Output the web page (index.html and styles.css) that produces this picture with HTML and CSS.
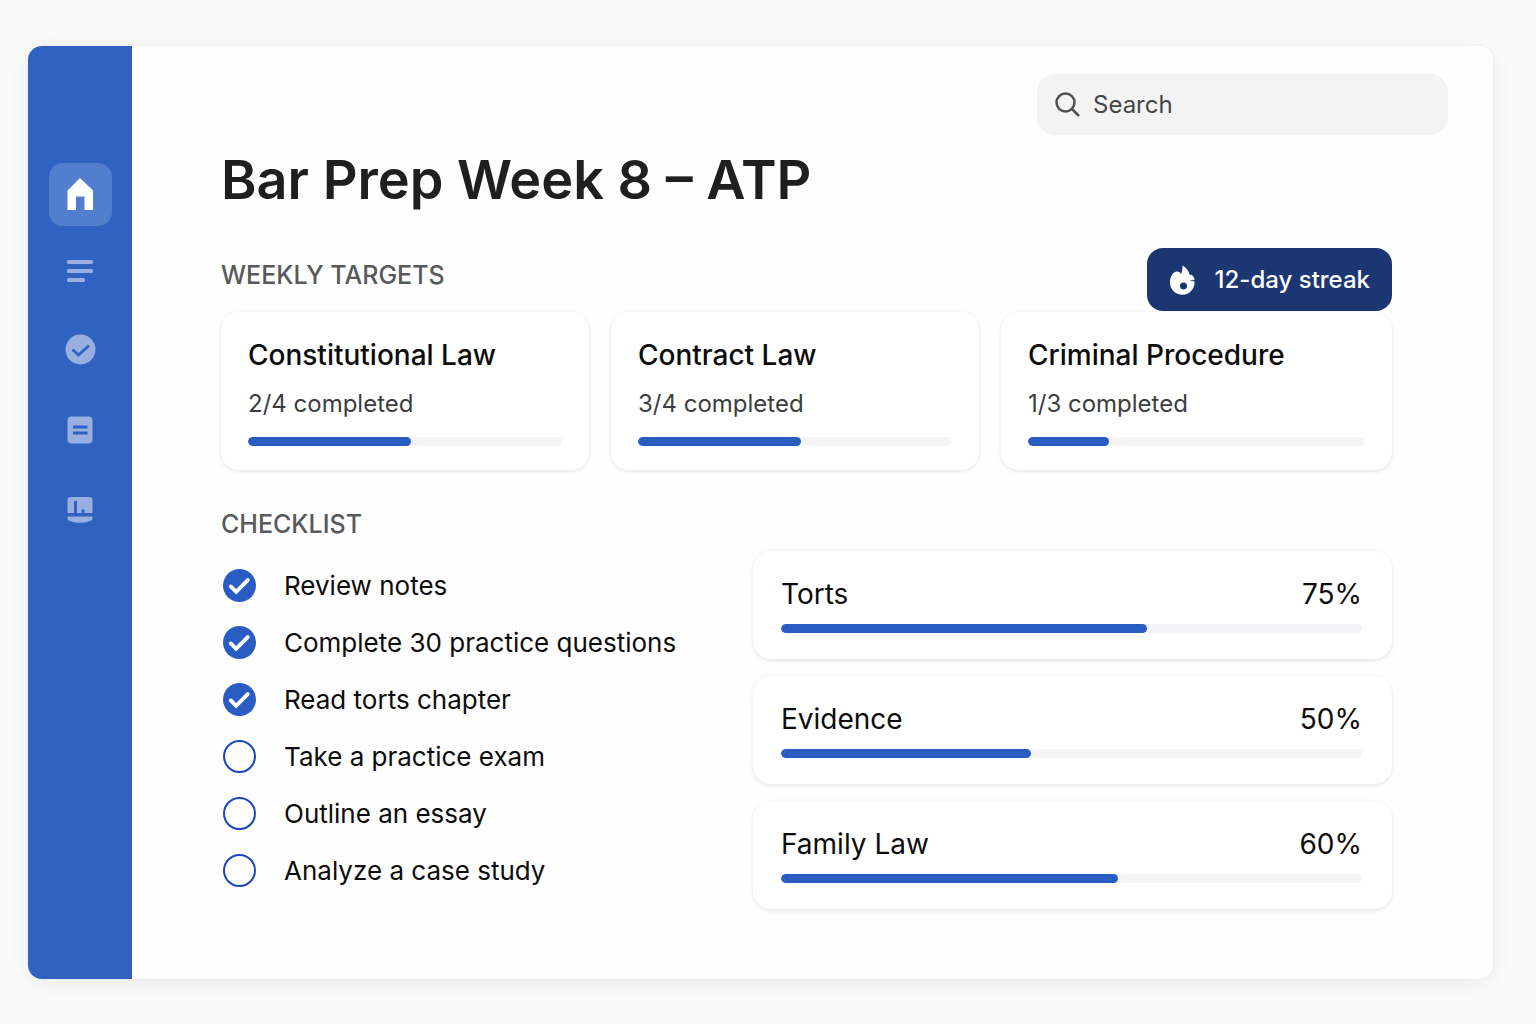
FILE: index.html
```html
<!DOCTYPE html>
<html lang="en">
<head>
  <meta charset="utf-8">
  <meta name="viewport" content="width=device-width, initial-scale=1">
  <title>Bar Prep Week 8 – ATP</title>
  <link rel="stylesheet" href="styles.css">
</head>
<body>
  <div class="window">
    <nav class="sidebar" aria-label="Main">
      <a class="nav-item nav-item-active" href="#home" aria-label="Home" aria-current="page">
        <svg viewBox="0 0 63 63" aria-hidden="true"><path fill="currentColor" d="M31 15L44 27.500V47H35.500V33.500H27V47H18.500V27.500Z"/></svg>
      </a>
      <a class="nav-item" href="#plan" aria-label="Plan">
        <svg viewBox="0 0 63 63" aria-hidden="true"><g fill="currentColor"><rect x="18" y="18" width="26" height="4" rx="1.500"/><rect x="18" y="27" width="26" height="4" rx="1.500"/><rect x="18" y="36" width="18" height="4" rx="1.500"/></g></svg>
      </a>
      <a class="nav-item" href="#tasks" aria-label="Tasks">
        <svg viewBox="0 0 63 63" aria-hidden="true"><circle cx="31.500" cy="28.500" r="15" fill="currentColor"/><path class="cut" d="M23.500 28.500l6 5.500 10.500-9.500"/></svg>
      </a>
      <a class="nav-item" href="#notes" aria-label="Notes">
        <svg viewBox="0 0 63 63" aria-hidden="true"><rect x="18.500" y="16.500" width="25" height="27" rx="4" fill="currentColor"/><path class="cut" d="M24 27h14.500M24 33h14.500"/></svg>
      </a>
      <a class="nav-item" href="#reports" aria-label="Reports">
        <svg viewBox="0 0 63 63" aria-hidden="true"><path fill="currentColor" d="M18.500 34V21a3 3 0 0 1 3-3H40.500a3 3 0 0 1 3 3V34ZM18.500 37.500H43.500v2.500c-3 5-22 5-25 0Z"/><path class="cut" d="M26.500 22V34M34 30.500v3.500"/></svg>
      </a>
    </nav>

    <main class="main">
      <form class="search" role="search">
        <svg class="search-icon" viewBox="0 0 26 26" aria-hidden="true"><circle cx="10.500" cy="10.500" r="9"/><path d="M17 17L24 24"/></svg>
        <input class="search-input" type="search" placeholder="Search" aria-label="Search">
      </form>

      <div class="content">
        <h1 class="title">Bar Prep Week 8 – ATP</h1>

        <section>
          <div class="section-head">
            <h2 class="section-title">WEEKLY TARGETS</h2>
            <button class="streak" type="button">
              <svg class="streak-icon" viewBox="0 0 26 30" aria-hidden="true"><path fill="currentColor" fill-rule="evenodd" d="M13.500.500C18.500 3.500 20 7 21 10.500L22.500 9.500C24.500 11.500 25.500 13 25.500 15L21.500 15.500V16.300H25.500C26 24 20.500 29.700 13.500 29.700S1 24.500 1 17.500C1 12 3.500 7 7.500 6.500C9.500 6.300 11 7 12 9C13.500 6.500 13.500 3.500 13.500.500ZM14.500 17.500a3.500 3.500 0 1 0 0 7 3.500 3.500 0 0 0 0-7Z"/></svg>
              12-day streak
            </button>
          </div>
          <div class="targets">
            <article class="card target">
              <h3 class="card-title">Constitutional Law</h3>
              <p class="card-note">2/4 completed</p>
              <progress class="bar" value="52" max="100" aria-label="Constitutional Law"></progress>
            </article>
            <article class="card target">
              <h3 class="card-title">Contract Law</h3>
              <p class="card-note">3/4 completed</p>
              <progress class="bar" value="52" max="100" aria-label="Contract Law"></progress>
            </article>
            <article class="card target">
              <h3 class="card-title">Criminal Procedure</h3>
              <p class="card-note">1/3 completed</p>
              <progress class="bar" value="24" max="100" aria-label="Criminal Procedure"></progress>
            </article>
          </div>
        </section>

        <section class="progress-section">
          <h2 class="section-title">CHECKLIST</h2>
          <div class="columns">
            <ul class="checklist">
              <li><label class="task"><input class="tick" type="checkbox" checked>Review notes</label></li>
              <li><label class="task"><input class="tick" type="checkbox" checked>Complete 30 practice questions</label></li>
              <li><label class="task"><input class="tick" type="checkbox" checked>Read torts chapter</label></li>
              <li><label class="task"><input class="tick" type="checkbox">Take a practice exam</label></li>
              <li><label class="task"><input class="tick" type="checkbox">Outline an essay</label></li>
              <li><label class="task"><input class="tick" type="checkbox">Analyze a case study</label></li>
            </ul>
            <div class="subjects">
              <article class="card subject">
                <div class="subject-head"><h3 class="subject-name">Torts</h3><span>75%</span></div>
                <progress class="bar" value="63" max="100" aria-label="Torts"></progress>
              </article>
              <article class="card subject">
                <div class="subject-head"><h3 class="subject-name">Evidence</h3><span>50%</span></div>
                <progress class="bar" value="43" max="100" aria-label="Evidence"></progress>
              </article>
              <article class="card subject">
                <div class="subject-head"><h3 class="subject-name">Family Law</h3><span>60%</span></div>
                <progress class="bar" value="58" max="100" aria-label="Family Law"></progress>
              </article>
            </div>
          </div>
        </section>
      </div>
    </main>
  </div>
</body>
</html>
```
FILE: styles.css
```css
:root {
  --blue: #2f62c1;
  --bar: #2a5dc4;
  --navy: #1c3671;
}

* {
  box-sizing: border-box;
}

body {
  margin: 0;
  min-height: 100vh;
  display: flex;
  padding: 46px 43px 45px 28px;
  background: #fafafa;
  color: #0c0c0d;
  font-family: Inter, "Liberation Sans", sans-serif;
}

h1, h2, h3, p, ul {
  margin: 0;
  padding: 0;
}

.window {
  flex: 1;
  display: flex;
  border-radius: 14px;
  background: #fefefe;
  box-shadow: 0 4px 24px rgba(0, 0, 0, .06), 0 0 3px rgba(0, 0, 0, .06);
  overflow: hidden;
}

.sidebar {
  flex: none;
  width: 104px;
  display: flex;
  flex-direction: column;
  align-items: center;
  gap: 16px;
  padding-top: 117px;
  background: var(--blue);
}

.nav-item {
  width: 63px;
  height: 63px;
  border-radius: 14px;
  color: #98afe0;
}

.nav-item svg {
  display: block;
}

.nav-item-active {
  background: #527fcd;
  color: #fff;
}

.cut {
  fill: none;
  stroke: var(--blue);
  stroke-width: 3;
}

.main {
  flex: 1;
  display: flex;
  flex-direction: column;
  padding: 28px 45px 70px 89px;
}

.search {
  align-self: flex-end;
  width: 411px;
  height: 61px;
  display: flex;
  align-items: center;
  gap: 12px;
  padding: 0 18px;
  border-radius: 18px;
  background: #f3f3f3;
}

.search-icon {
  flex: none;
  width: 26px;
  height: 26px;
  fill: none;
  stroke: #505153;
  stroke-width: 2.5;
}

.search-input {
  flex: 1;
  min-width: 0;
  padding: 0;
  border: 0;
  outline: 0;
  background: none;
  color: #444547;
  font: 400 24px/32px Inter, "Liberation Sans", sans-serif;
}

.search-input::placeholder {
  color: #444547;
}

.content {
  padding-right: 56px;
}

.title {
  margin-top: 13px;
  color: #1f1f20;
  font-size: 54px;
  font-weight: 600;
  line-height: 64px;
}

.section-head {
  display: flex;
  justify-content: space-between;
  align-items: flex-start;
  margin: 36px 0 1px;
}

.section-title {
  color: #58595b;
  font-size: 25px;
  font-weight: 500;
  line-height: 32px;
}

.section-head .section-title {
  padding-top: 11px;
}

.streak {
  height: 63px;
  display: flex;
  align-items: center;
  gap: 20px;
  padding: 0 22px;
  border: 0;
  border-radius: 16px;
  background: var(--navy);
  color: #fff;
  font: 500 24px/32px Inter, "Liberation Sans", sans-serif;
}

.streak-icon {
  width: 26px;
  height: 30px;
}

.targets {
  display: grid;
  grid-template-columns: 368fr 368fr 391fr;
  gap: 22px;
}

.card {
  border-radius: 18px;
  background: #fff;
  box-shadow: 0 2px 4px rgba(0, 0, 0, .08), 0 0 4px rgba(0, 0, 0, .03);
}

.target {
  padding: 26px 27px 24px;
}

.card-title {
  font-size: 28px;
  font-weight: 500;
  line-height: 34px;
}

.card-note {
  margin: 16px 0 17px;
  color: #3c3d3f;
  font-size: 24px;
  line-height: 32px;
}

.bar {
  display: block;
  width: 100%;
  height: 9px;
  appearance: none;
  border: 0;
  border-radius: 5px;
  background: #f4f4f6;
  overflow: hidden;
}

.bar::-webkit-progress-bar {
  background: #f4f4f6;
}

.bar::-webkit-progress-value {
  border-radius: 5px;
  background: var(--bar);
}

.bar::-moz-progress-bar {
  border-radius: 5px;
  background: var(--bar);
}

.progress-section {
  margin-top: 38px;
}

.columns {
  display: grid;
  grid-template-columns: 532fr 639fr;
}

.checklist {
  padding: 17px 0 0 2px;
  list-style: none;
}

.task {
  height: 57px;
  display: flex;
  align-items: center;
  gap: 28px;
  font-size: 26px;
  line-height: 36px;
}

.tick {
  flex: none;
  width: 33px;
  height: 33px;
  margin: 0;
  appearance: none;
  border: 2px solid #1a47be;
  border-radius: 50%;
}

.tick:checked {
  border: 0;
  background: var(--bar) url("data:image/svg+xml,%3Csvg xmlns='http://www.w3.org/2000/svg' viewBox='0 0 34 34'%3E%3Cpath d='M8 18L13.500 23.500L25.500 11.500' fill='none' stroke='white' stroke-width='4' stroke-linecap='round'/%3E%3C/svg%3E") center / contain no-repeat;
}

.subjects {
  display: flex;
  flex-direction: column;
  gap: 17px;
  padding-top: 11px;
}

.subject {
  padding: 26px 30px 26px 28px;
}

.subject-head {
  display: flex;
  justify-content: space-between;
  margin-bottom: 13px;
  font-size: 28px;
  line-height: 34px;
}

.subject-name {
  font-size: 28px;
  font-weight: 400;
}
```
